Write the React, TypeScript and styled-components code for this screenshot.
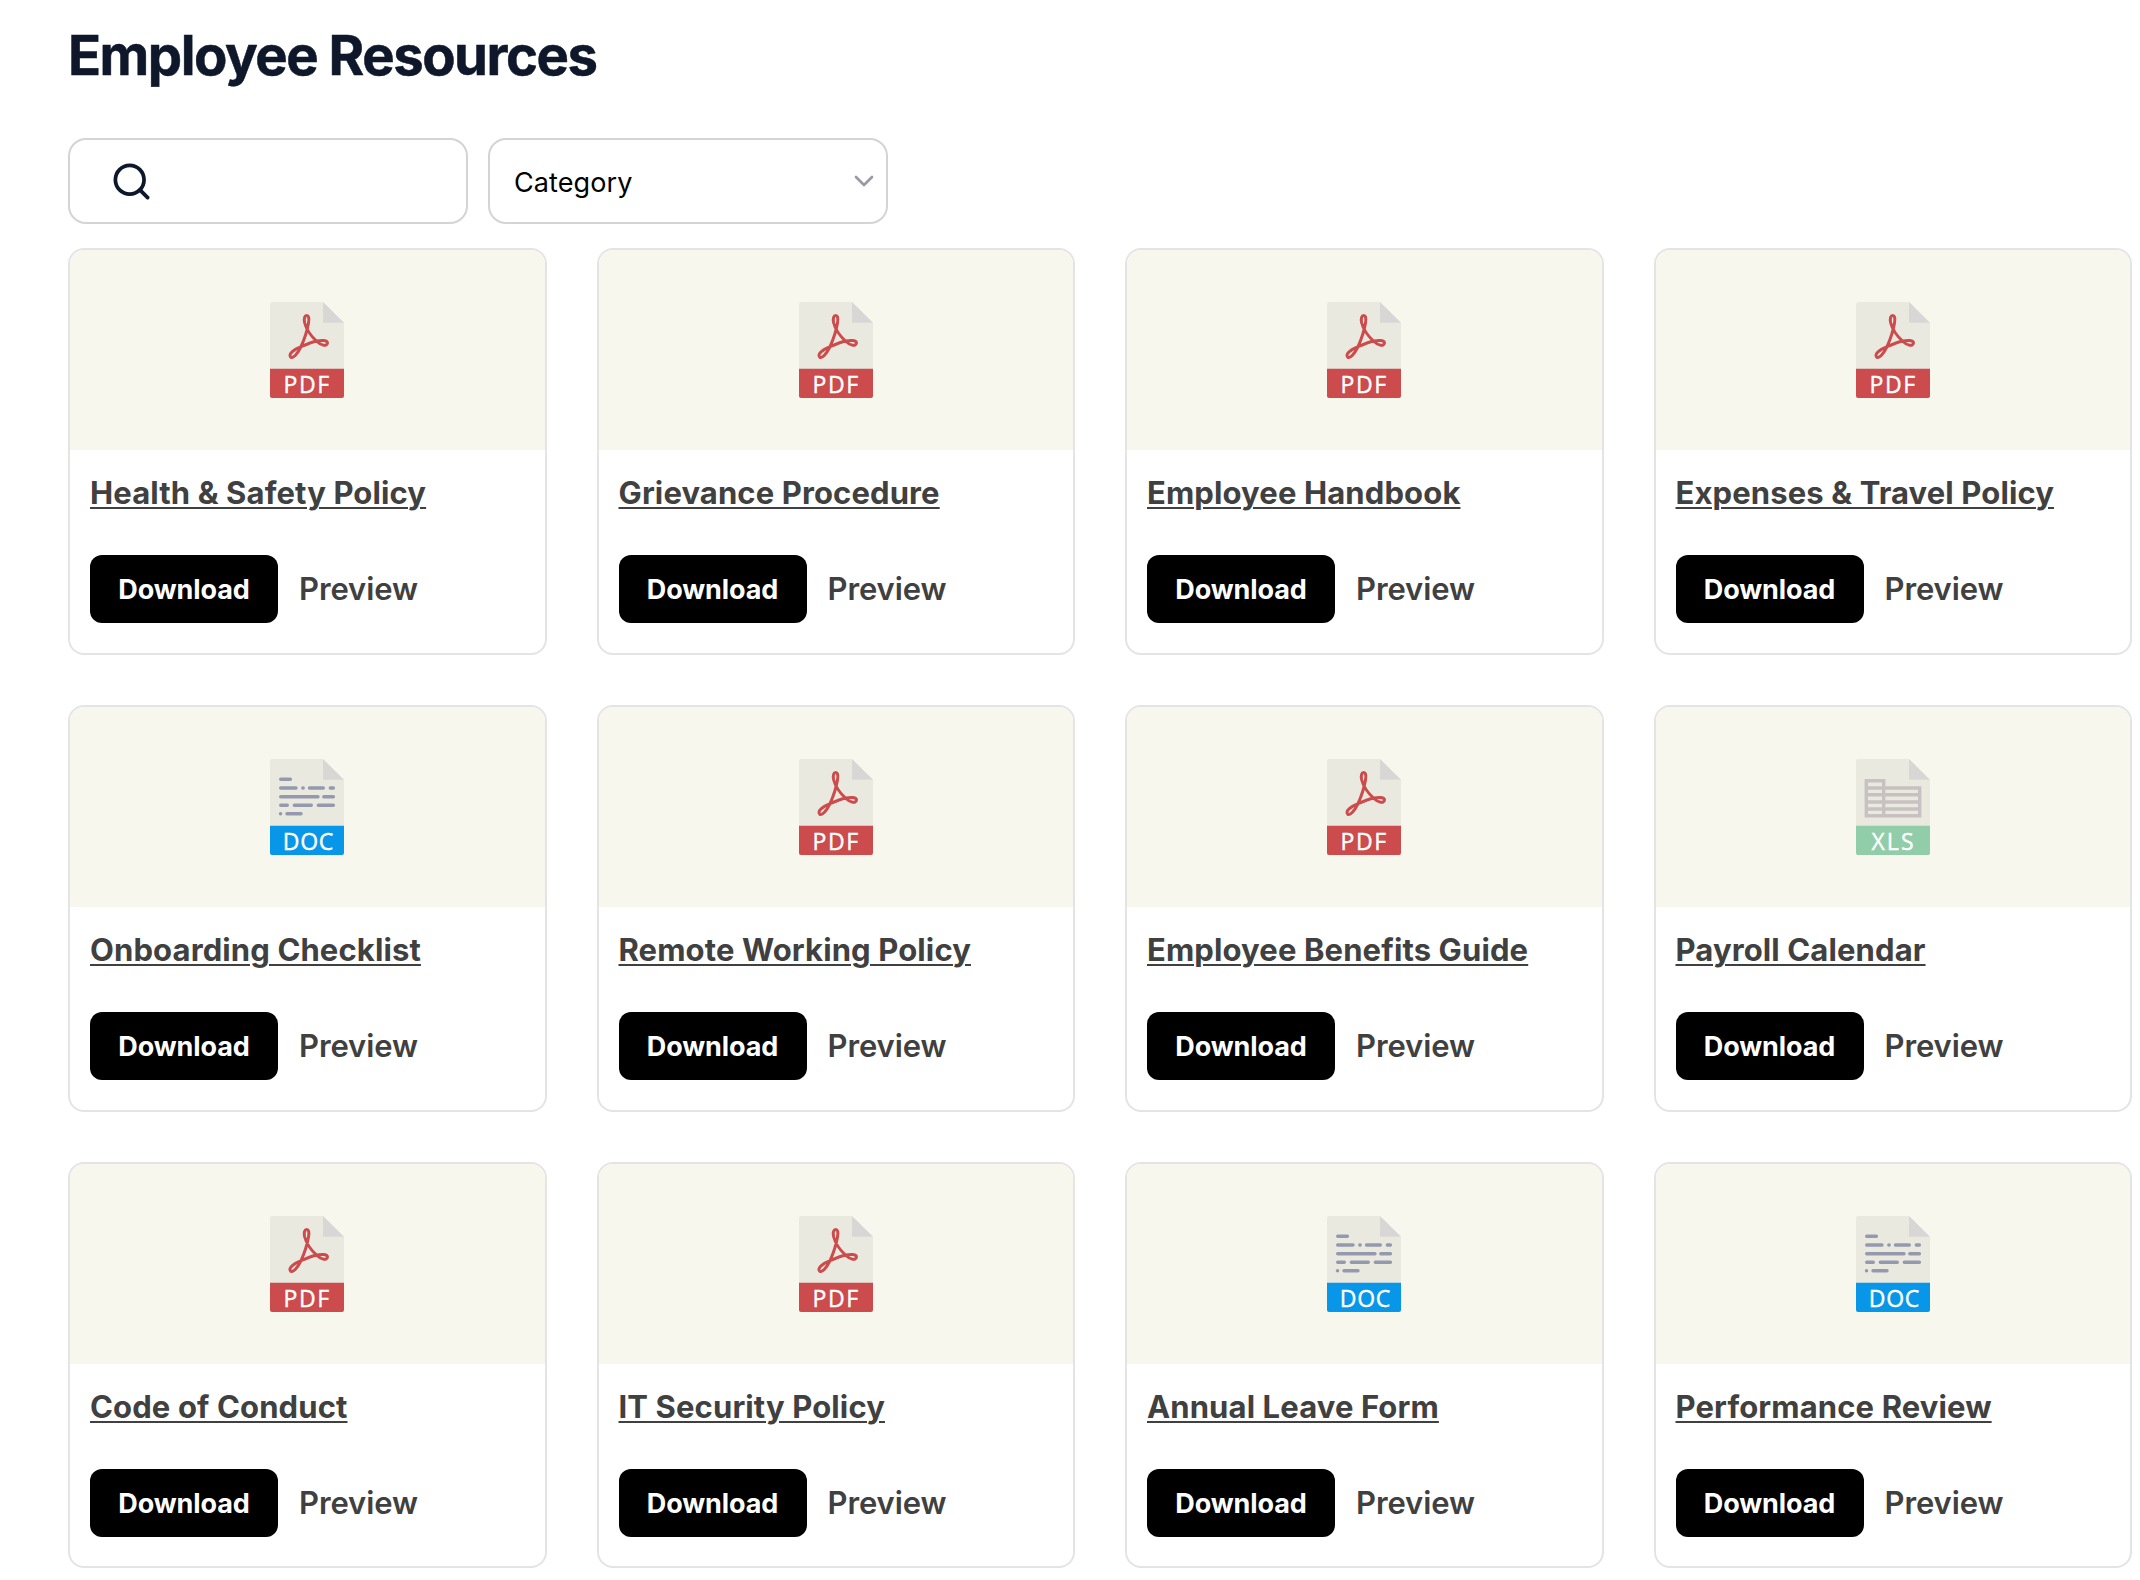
import React from "react";
import styled, { createGlobalStyle } from "styled-components";

type FileKind = "pdf" | "doc" | "xls";

interface Resource {
  title: string;
  kind: FileKind;
}

const resources: Resource[] = [
  { title: "Health & Safety Policy", kind: "pdf" },
  { title: "Grievance Procedure", kind: "pdf" },
  { title: "Employee Handbook", kind: "pdf" },
  { title: "Expenses & Travel Policy", kind: "pdf" },
  { title: "Onboarding Checklist", kind: "doc" },
  { title: "Remote Working Policy", kind: "pdf" },
  { title: "Employee Benefits Guide", kind: "pdf" },
  { title: "Payroll Calendar", kind: "xls" },
  { title: "Code of Conduct", kind: "pdf" },
  { title: "IT Security Policy", kind: "pdf" },
  { title: "Annual Leave Form", kind: "doc" },
  { title: "Performance Review", kind: "doc" },
];

const GlobalStyle = createGlobalStyle`
  *, *::before, *::after { box-sizing: border-box; }
  body {
    margin: 0;
    background: #fff;
    color: #0f172a;
    font-family: Inter, "Liberation Sans", sans-serif;
  }
`;

const Page = styled.main`
  padding: 19px 8px 0 68px;
`;

const Heading = styled.h1`
  margin: 0;
  height: 119px;
  font-size: 54.5px;
  line-height: 72px;
  font-weight: 700;
  letter-spacing: -1.5px;
  white-space: nowrap;
  -webkit-text-stroke: 0.5px currentColor;
`;

const Filters = styled.div`
  display: flex;
  gap: 20px;
  margin-bottom: 24px;
`;

const Field = styled.div`
  display: flex;
  align-items: center;
  width: 400px;
  height: 86px;
  border: 2px solid #d4d4d4;
  border-radius: 18px;
  background: #fff;
`;

const SearchField = styled(Field)`
  padding-left: 40px;
`;

const SelectField = styled(Field)`
  justify-content: space-between;
  padding: 0 12px 0 24px;
  color: #000;
  font-size: 27px;
  line-height: 40px;
  letter-spacing: 0.1px;
`;

const SelectValue = styled.span`
  padding-top: 3px;
`;

const Grid = styled.section`
  display: grid;
  grid-template-columns: repeat(4, 1fr);
  grid-auto-rows: 406.75px;
  gap: 50px;
`;

const Card = styled.article`
  display: flex;
  flex-direction: column;
  border: 2px solid #e4e4e7;
  border-radius: 16px;
  overflow: hidden;
  background: #fff;
`;

const Thumb = styled.div`
  display: flex;
  align-items: center;
  justify-content: center;
  flex: none;
  height: 200px;
  background: #f7f7ee;
`;

const CardBody = styled.div`
  display: flex;
  flex-direction: column;
  align-items: flex-start;
  padding: 19px 20px 0;
`;

const Title = styled.a`
  color: #404040;
  font-size: 31px;
  line-height: 48px;
  font-weight: 700;
  letter-spacing: 0.12px;
  text-decoration: underline;
  text-decoration-thickness: 2px;
  text-underline-offset: 3px;
  white-space: nowrap;
`;

const Actions = styled.div`
  display: flex;
  align-items: center;
  gap: 21px;
  margin-top: 38px;
`;

const DownloadButton = styled.button`
  width: 188px;
  height: 68px;
  padding: 2px 0 0;
  border: 0;
  border-radius: 12px;
  background: #000;
  color: #fff;
  font: 700 27px/40px Inter, "Liberation Sans", sans-serif;
  letter-spacing: -0.1px;
`;

const PreviewLink = styled.a`
  color: #404040;
  font-size: 31px;
  line-height: 48px;
  font-weight: 600;
  letter-spacing: -0.1px;
`;

const IconLabel = styled.text`
  fill: #fff;
  stroke: #fff;
  stroke-width: 0.4px;
  font-family: "Open Sans", "Noto Sans", sans-serif;
  font-size: 23px;
  font-weight: 400;
`;

const bands: Record<FileKind, string> = {
  pdf: "#cc4b4c",
  doc: "#0896e8",
  xls: "#91cda9",
};

const labels: Record<FileKind, { x: number; width: number }> = {
  pdf: { x: 13.6, width: 45.5 },
  doc: { x: 12.8, width: 50.5 },
  xls: { x: 15.5, width: 42 },
};

const AcrobatMark = () => (
  <path
    d="M31 44.700C24.500 47.300 17.800 52 20.600 55C23 57 27 52.500 31 44.700C34 38 37 30 38.500 21C39.500 15 38.300 13.400 36.700 13.400C35 13.400 33.500 15.500 34.700 21C36.500 28 41.500 34.500 47 39.500C51 43.600 57.200 44.700 57.500 41C57.500 38 51.500 38 47 39C41 40.300 36 42.500 31 44.700Z"
    fill="none"
    stroke="#cc4b4c"
    strokeWidth="3"
    strokeLinejoin="round"
  />
);

const TextLines = () => (
  <path
    d="M10.700 20.300H20.400M10.700 29H26M32.800 29H33.200M39.500 29H53.300M60.300 29H63.400M10.700 37.700H48M53.800 37.700H63.400M10.700 46.300H17.300M24.300 46.300H41.300M48.300 46.300H63.400M10.500 54.800H10.600M17 54.800H31"
    fill="none"
    stroke="#9499ad"
    strokeWidth="3.400"
    strokeLinecap="round"
  />
);

const SheetTable = () => (
  <path
    d="M10.300 21.800H27.700V56.800H10.300ZM27.700 29H63.700V56.800H27.700M10.300 29H27.700M10.300 35.800H63.700M10.300 43H63.700M10.300 50H63.700"
    fill="none"
    stroke="#c8c1c1"
    strokeWidth="3.400"
  />
);

const FileIcon = ({ kind }: { kind: FileKind }) => (
  <svg width="74" height="96" viewBox="0 0 74 96" aria-hidden="true">
    <path d="M2 0H53L74 21V67H0V2Q0 0 2 0Z" fill="#e9e9e0" />
    <path d="M53 0L74 20.700H53Z" fill="#d9d7d5" />
    <path d="M0 66.700H74V94Q74 96 72 96H2Q0 96 0 94Z" fill={bands[kind]} />
    {kind === "pdf" && <AcrobatMark />}
    {kind === "doc" && <TextLines />}
    {kind === "xls" && <SheetTable />}
    <IconLabel x={labels[kind].x} y="90.500" textLength={labels[kind].width}>
      {kind.toUpperCase()}
    </IconLabel>
  </svg>
);

const SearchIcon = () => (
  <svg
    width="43"
    height="43"
    viewBox="0 0 24 24"
    fill="none"
    stroke="#0f172a"
    strokeWidth="2.100"
    strokeLinecap="round"
    strokeLinejoin="round"
  >
    <circle cx="11" cy="11" r="8" />
    <path d="m21 21-4.300-4.300" />
  </svg>
);

const ChevronIcon = () => (
  <svg width="20" height="12" viewBox="0 0 20 12" fill="none">
    <path
      d="M2 2L10 10L18 2"
      stroke="#9a9aa6"
      strokeWidth="2.700"
      strokeLinecap="round"
      strokeLinejoin="round"
    />
  </svg>
);

const ResourceCard = ({ title, kind }: Resource) => (
  <Card>
    <Thumb>
      <FileIcon kind={kind} />
    </Thumb>
    <CardBody>
      <Title>{title}</Title>
      <Actions>
        <DownloadButton>Download</DownloadButton>
        <PreviewLink>Preview</PreviewLink>
      </Actions>
    </CardBody>
  </Card>
);

export default function App() {
  return (
    <>
      <GlobalStyle />
      <Page>
        <Heading>Employee Resources</Heading>
        <Filters>
          <SearchField>
            <SearchIcon />
          </SearchField>
          <SelectField>
            <SelectValue>Category</SelectValue>
            <ChevronIcon />
          </SelectField>
        </Filters>
        <Grid>
          {resources.map((resource) => (
            <ResourceCard key={resource.title} {...resource} />
          ))}
        </Grid>
      </Page>
    </>
  );
}
